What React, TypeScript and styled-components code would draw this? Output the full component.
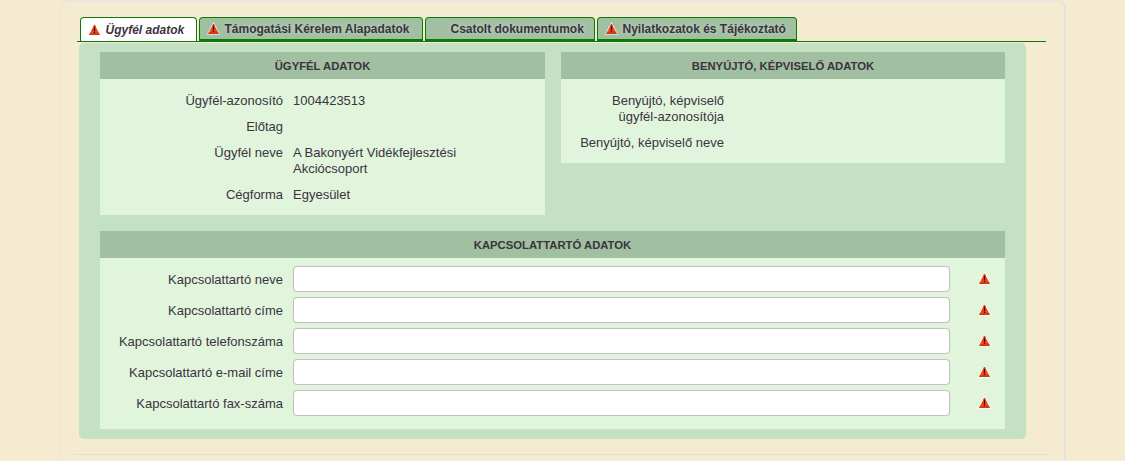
import React from 'react'
import styled, { createGlobalStyle } from 'styled-components'

const GlobalStyle = createGlobalStyle`
  html, body {
    margin: 0;
    height: 100%;
    background: #f5ebd1;
    overflow: hidden;
  }
  body, input {
    font-family: "Liberation Sans", Arial, sans-serif;
    font-size: 13px;
    color: #3b3340;
  }
`

const Page = styled.div`
  box-sizing: border-box;
  width: 1006px;
  height: 461px;
  margin-left: 60px;
  padding: 15px 0 0 17px;
  border-top: 2px solid #ebe6da;
  border-left: 2px solid #f1e8d4;
  border-right: 2px solid #e6e2da;
  border-radius: 8px 8px 0 0;
`

const TabBar = styled.div`
  display: flex;
  width: 969px;
  box-sizing: border-box;
  height: 25px;
  padding-left: 3px;
  margin-left: -2px;
  border-bottom: 1px solid #0b7a0b;
`

const Tab = styled.div<{ $active?: boolean; $w: number; $gap: number }>`
  box-sizing: border-box;
  display: flex;
  align-items: center;
  width: ${p => p.$w}px;
  margin-right: ${p => p.$gap}px;
  height: 24px;
  padding-left: 7px;
  gap: 4.5px;
  border: 1px solid #0b7a0b;
  border-bottom: ${p => (p.$active ? '0' : '2px solid #0b7a0b')};
  border-radius: 4px 4px 0 0;
  background: ${p => (p.$active ? '#fff' : '#a1bfa1')};
  font-size: 12px;
  font-weight: bold;
  font-style: ${p => (p.$active ? 'italic' : 'normal')};
  text-shadow: ${p => (p.$active ? 'none' : '0 0 4px #c8dcc8')};
  white-space: nowrap;
`

const TabSpacer = styled.span`
  display: inline-block;
  width: 13px;
  height: 13px;
`

const Panel = styled.div`
  box-sizing: border-box;
  width: 947px;
  height: 396px;
  margin-top: 1px;
  padding: 9px 21px 10px;
  display: flex;
  flex-direction: column;
  gap: 16px;
  background: #c4e1c4;
  border-radius: 5px;
`

const Columns = styled.div`
  display: grid;
  grid-template-columns: 445px 444px;
  column-gap: 16px;
  align-items: start;
`

const Section = styled.section`
  background: #e0f5dc;
`

const SectionHead = styled.h2`
  margin: 0;
  height: 27px;
  line-height: 28px;
  text-align: center;
  font-size: 11.3px;
  font-weight: bold;
  background: #a1bfa1;
`

const InfoList = styled.div`
  display: flex;
  flex-direction: column;
  gap: 10px;
  padding: 14px 0 12px;
  line-height: 16px;
`

const InfoRow = styled.div<{ $labelWidth: number }>`
  display: grid;
  grid-template-columns: ${p => p.$labelWidth}px 1fr;
  column-gap: 10px;
  min-height: 16px;
`

const Label = styled.div`
  text-align: right;
  white-space: pre-line;
`

const Value = styled.div`
  max-width: 190px;
`

const ContactList = styled.div`
  display: flex;
  flex-direction: column;
  gap: 5px;
  padding: 8px 0 13px;
`

const ContactRow = styled.div`
  display: grid;
  grid-template-columns: 183px 657px 13px;
  column-gap: 10px;
  align-items: center;
  height: 26px;
`

const TextField = styled.input`
  box-sizing: border-box;
  width: 100%;
  height: 26px;
  padding: 0 6px;
  background: #fff;
  border: 1px solid #c2c2c2;
  border-radius: 4px;
  box-shadow: 0 0 1px #cfcfcf;
  outline: none;
`

const WarnSlot = styled.div`
  display: flex;
  margin: -2px 0 0 18px;
`

const BottomRule = styled.div`
  width: 975px;
  height: 1px;
  margin: 15px 0 0 -5px;
  background: #e2dfda;
`

const WarnIcon = () => (
  <svg width="13" height="13" viewBox="0 0 13 13" style={{ flex: 'none' }}>
    <path d="M6.5 0 L13 12.6 H0 Z" fill="#fff" />
    <path d="M6.5 1.6 L11.9 11.8 H1.1 Z" fill="#ec3a16" />
    <path d="M5.7 2.4 H7.3 L7.9 3.6 H5.1 Z" fill="#b9280f" />
    <path d="M1.5 10.8 H11.5 L11.9 11.8 H1.1 Z" fill="#b5300c" />
    <rect x="3.4" y="8.6" width="1" height="1" fill="#f58a1e" />
    <rect x="8.6" y="7.6" width="1" height="1" fill="#f58a1e" />
    <rect x="6" y="4.2" width="1" height="3.8" fill="#1c0d06" />
    <rect x="6" y="8.8" width="1" height="1.2" fill="#1c0d06" />
  </svg>
)

const tabs = [
  { label: 'Ügyfél adatok', w: 117, gap: 2, warn: true, active: true },
  { label: 'Támogatási Kérelem Alapadatok', w: 224, gap: 2, warn: true },
  { label: 'Csatolt dokumentumok', w: 170, gap: 2, warn: false },
  { label: 'Nyilatkozatok és Tájékoztató', w: 200, gap: 0, warn: true },
]

const clientRows = [
  { label: 'Ügyfél-azonosító', value: '1004423513' },
  { label: 'Előtag', value: '' },
  { label: 'Ügyfél neve', value: 'A Bakonyért Vidékfejlesztési Akciócsoport' },
  { label: 'Cégforma', value: 'Egyesület' },
]

const agentRows = [
  { label: 'Benyújtó, képviselő\nügyfél-azonosítója', value: '' },
  { label: 'Benyújtó, képviselő neve', value: '' },
]

const contactRows = [
  'Kapcsolattartó neve',
  'Kapcsolattartó címe',
  'Kapcsolattartó telefonszáma',
  'Kapcsolattartó e-mail címe',
  'Kapcsolattartó fax-száma',
]

export default function App() {
  return (
    <>
      <GlobalStyle />
      <Page>
        <TabBar>
          {tabs.map(tab => (
            <Tab key={tab.label} $active={tab.active} $w={tab.w} $gap={tab.gap}>
              {tab.warn ? <WarnIcon /> : <TabSpacer />}
              {tab.label}
            </Tab>
          ))}
        </TabBar>
        <Panel>
          <Columns>
            <Section>
              <SectionHead>ÜGYFÉL ADATOK</SectionHead>
              <InfoList>
                {clientRows.map(row => (
                  <InfoRow key={row.label} $labelWidth={183}>
                    <Label>{row.label}</Label>
                    <Value>{row.value}</Value>
                  </InfoRow>
                ))}
              </InfoList>
            </Section>
            <Section>
              <SectionHead>BENYÚJTÓ, KÉPVISELŐ ADATOK</SectionHead>
              <InfoList>
                {agentRows.map(row => (
                  <InfoRow key={row.label} $labelWidth={163}>
                    <Label>{row.label}</Label>
                    <Value>{row.value}</Value>
                  </InfoRow>
                ))}
              </InfoList>
            </Section>
          </Columns>
          <Section>
            <SectionHead>KAPCSOLATTARTÓ ADATOK</SectionHead>
            <ContactList>
              {contactRows.map(label => (
                <ContactRow key={label}>
                  <Label>{label}</Label>
                  <TextField type="text" />
                  <WarnSlot>
                    <WarnIcon />
                  </WarnSlot>
                </ContactRow>
              ))}
            </ContactList>
          </Section>
        </Panel>
        <BottomRule />
      </Page>
    </>
  )
}
